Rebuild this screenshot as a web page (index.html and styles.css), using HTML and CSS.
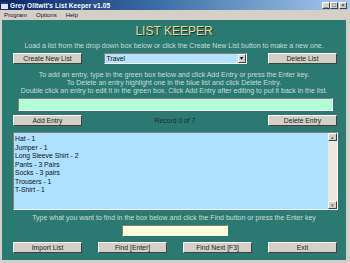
FILE: index.html
```html
<!DOCTYPE html>
<html lang="en">
<head>
    <meta charset="UTF-8">
    <title>List Keeper</title>
    <link rel="stylesheet" href="styles.css">
</head>
<body>
    <div class="window">
        <div class="titlebar">
            <span class="app-icon"></span>
            <span class="title-text">Grey Olltwit's List Keeper v1.05</span>
            <div class="caption-buttons">
                <span class="cap-btn">_</span>
                <span class="cap-btn">&#9633;</span>
                <span class="cap-btn close">&times;</span>
            </div>
        </div>

        <div class="menubar">
            <span>Program</span>
            <span>Options</span>
            <span>Help</span>
        </div>

        <div class="panel">
            <h1 class="heading">LIST KEEPER</h1>
            <p class="note">Load a list from the drop down box below or click the Create New List button to make a new one.</p>

            <div class="row">
                <button class="btn">Create New List</button>
                <div class="combo">
                    <span class="combo-text">Travel</span>
                    <span class="combo-arrow">&#9662;</span>
                </div>
                <button class="btn">Delete List</button>
            </div>

            <div class="instructions">
                <p class="note">To add an entry, type in the green box below and click Add Entry or press the Enter key.</p>
                <p class="note">To Delete an entry highlight one in the blue list and click Delete Entry.</p>
                <p class="note">Double click an entry to edit it in the green box. Click Add Entry after editing to put it back in the list.</p>
            </div>

            <div class="entry-box"></div>

            <div class="row">
                <button class="btn">Add Entry</button>
                <span class="record">Record 0 of 7</span>
                <button class="btn">Delete Entry</button>
            </div>

            <div class="listbox">
                <ul class="items">
                    <li>Hat - 1</li>
                    <li>Jumper - 1</li>
                    <li>Long Sleeve Shirt - 2</li>
                    <li>Pants - 3 Pairs</li>
                    <li>Socks - 3 pairs</li>
                    <li>Trousers - 1</li>
                    <li>T-Shirt - 1</li>
                </ul>
                <div class="scrollbar">
                    <span class="scroll-btn">&#9652;</span>
                    <span class="scroll-btn">&#9662;</span>
                </div>
            </div>

            <p class="note find-note">Type what you want to find in the box below and click the Find button or press the Enter key</p>
            <div class="find-box"></div>

            <div class="row bottom-row">
                <button class="btn">Import List</button>
                <button class="btn">Find [Enter]</button>
                <button class="btn">Find Next [F3]</button>
                <button class="btn">Exit</button>
            </div>
        </div>
    </div>
</body>
</html>
```

FILE: styles.css
```css
body {
    margin: 0;
    padding: 0;
    font-family: "Liberation Sans", Arial, sans-serif;
    background-color: #d4d0c8;
}

.window {
    width: 350px;
    height: 263px;
    background-color: #d4d0c8;
    display: flex;
    flex-direction: column;
    overflow: hidden;
}

.titlebar {
    height: 10px;
    display: flex;
    align-items: center;
    background: linear-gradient(to right, #0a246a, #3a6ea5 45%, #a6caf0);
    padding: 0 3px 0 1px;
}

.app-icon {
    width: 7px;
    height: 7px;
    background-color: #dfe6f0;
    border-top: 2px solid #24408a;
    box-sizing: border-box;
    margin-right: 2px;
}

.title-text {
    color: white;
    font-weight: bold;
    font-size: 6.5px;
    letter-spacing: 0.1px;
}

.caption-buttons {
    margin-left: auto;
    display: flex;
}

.cap-btn {
    width: 8px;
    height: 7px;
    background-color: #d4d0c8;
    border: 1px solid;
    border-color: #fff #404040 #404040 #fff;
    box-sizing: border-box;
    font-size: 6px;
    line-height: 4px;
    text-align: center;
    color: black;
}

.cap-btn.close {
    margin-left: 1px;
}

.menubar {
    height: 10px;
    display: flex;
    align-items: center;
    gap: 9px;
    padding-left: 4px;
    font-size: 6px;
    color: #111;
}

.panel {
    margin: 0 4px 3px 2px;
    height: 240px;
    background-color: #2b7a72;
    display: flex;
    flex-direction: column;
    box-sizing: border-box;
}

.heading {
    margin: 4px 0 0;
    height: 14px;
    line-height: 14px;
    text-align: center;
    font-size: 12px;
    font-weight: normal;
    color: #ead89a;
    text-shadow: 1px 1px 0 #1a3a30;
}

.note {
    margin: 0;
    height: 8px;
    line-height: 8px;
    text-align: center;
    font-size: 7px;
    color: #c9dcd6;
    white-space: nowrap;
}

.heading + .note {
    margin-top: 4px;
}

.row {
    display: flex;
    align-items: center;
    justify-content: space-between;
    margin: 3px 9px 0 11px;
}

.btn {
    width: 69px;
    height: 11px;
    padding: 0;
    background-color: #d4d0c8;
    border: 1px solid;
    border-color: #fff #404040 #404040 #fff;
    font-family: "Liberation Sans", Arial, sans-serif;
    font-size: 6.8px;
    color: #222;
}

.combo {
    width: 143px;
    height: 11px;
    display: flex;
    align-items: center;
    background-color: #b4e2ff;
    border: 1px solid;
    border-color: #808080 #fff #fff #808080;
    box-sizing: border-box;
}

.combo-text {
    flex: 1;
    font-size: 6.8px;
    padding-left: 2px;
    color: #111;
}

.combo-arrow {
    width: 8px;
    height: 9px;
    background-color: #d4d0c8;
    border: 1px solid;
    border-color: #fff #404040 #404040 #fff;
    box-sizing: border-box;
    font-size: 6px;
    line-height: 7px;
    text-align: center;
    color: black;
}

.instructions {
    margin-top: 7px;
}

.entry-box {
    margin: 3px 13px 0 16px;
    height: 13px;
    background-color: #b2fed6;
    border: 1px solid;
    border-color: #808080 #fff #fff #808080;
    box-sizing: border-box;
}

.row + .row,
.entry-box + .row {
    margin-top: 4px;
}

.record {
    font-size: 6.8px;
    color: #17302c;
}

.listbox {
    margin: 6px 8px 0 11px;
    height: 78px;
    display: flex;
    background-color: #aee0ff;
    border: 1px solid;
    border-color: #808080 #fff #fff #808080;
    box-sizing: border-box;
}

.items {
    flex: 1;
    list-style: none;
    margin: 0;
    padding: 2px 0 0 1px;
    font-size: 6.8px;
    line-height: 8.5px;
    color: #111;
}

.scrollbar {
    width: 9px;
    display: flex;
    flex-direction: column;
    justify-content: space-between;
    background-color: #eae8e2;
}

.scroll-btn {
    height: 8px;
    background-color: #d4d0c8;
    border: 1px solid;
    border-color: #fff #404040 #404040 #fff;
    box-sizing: border-box;
    font-size: 5px;
    line-height: 6px;
    text-align: center;
    color: #666;
}

.find-note {
    margin-top: 4px;
}

.find-box {
    margin: 3px 0 0 120px;
    width: 106px;
    height: 11px;
    background-color: #ffffd8;
    border: 1px solid;
    border-color: #808080 #fff #fff #808080;
    box-sizing: border-box;
}

.bottom-row {
    margin-top: 6px;
}
```
